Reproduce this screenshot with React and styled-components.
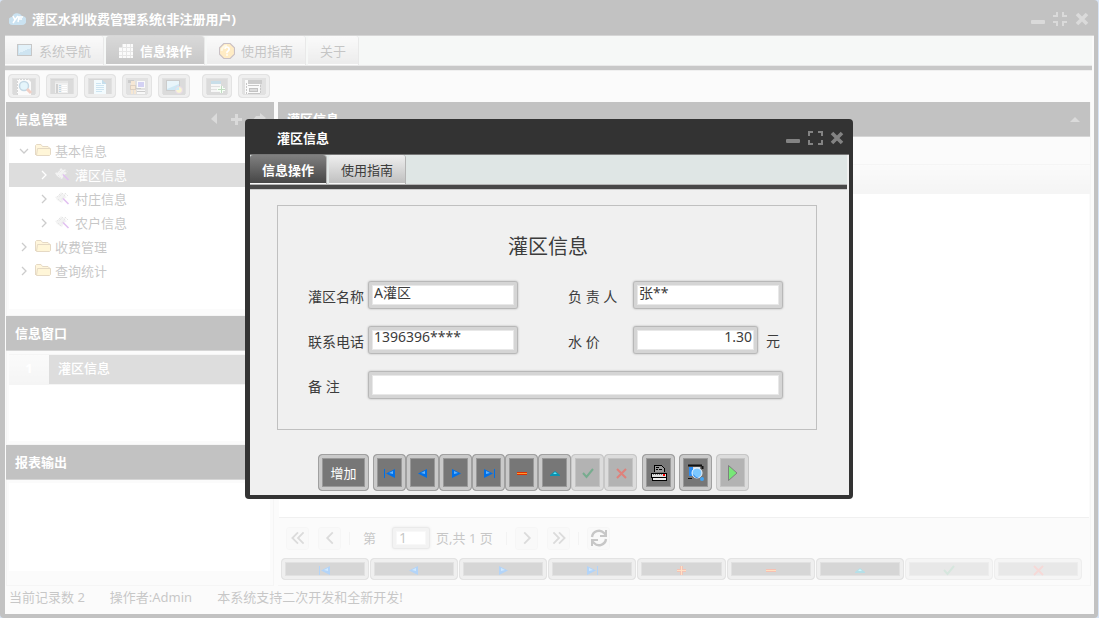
import React from 'react';
import styled, { createGlobalStyle, css } from 'styled-components';

const GlobalStyle = createGlobalStyle`
  * {
    box-sizing: border-box;
  }

  body {
    margin: 0;
    background: #7ea6dc;
    color: #3c3c3c;
    font: 13px/20px "Noto Sans", "Noto Sans CJK SC", sans-serif;
  }

  button, input {
    font: inherit;
    color: inherit;
  }

  svg {
    display: block;
    flex: none;
  }
`;

// Window frame
const Desktop = styled.div`
  min-height: 100vh;
  padding-right: 1px;
  display: flex;
`;

const Mask = styled.div`
  position: fixed;
  inset: 0;
  display: grid;
  place-items: center;
  padding-right: 1px;
  background: rgba(255, 255, 255, 0.7);
`;

const Frame = styled.section`
  display: flex;
  flex-direction: column;
  width: 100%;
  max-width: ${(p) => p.$maxWidth || 'none'};
  padding: 0 4px 4px 5px;
  background: #333;
  border-radius: 4px;
`;

const TitleBar = styled.header`
  display: flex;
  align-items: center;
  gap: 6px;
  height: 35px;
  padding: 3px 4px 0 ${(p) => p.$indent};
`;

const WindowTitle = styled.h1`
  flex: 1;
  margin: 0;
  color: #fff;
  font-size: 13px;
  font-weight: 700;
`;

const BareButton = styled.button`
  display: flex;
  padding: 0;
  border: 0;
  background: none;
  color: #838383;
`;

const FrameBody = styled.div`
  flex: 1;
  display: flex;
  flex-direction: column;
  border-top: 1px solid #777;
  background: #f0f0f0;
`;

// Tabs
const TabBar = styled.nav`
  display: flex;
  gap: 3px;
  height: 34px;
  margin-right: 2px;
  background: #dfe6e5;
  border-bottom: 4px solid #484848;
  box-shadow: inset 0 -1px #b4b4b4, 0 1px #ccc;
`;

const Tab = styled.button`
  display: flex;
  align-items: center;
  gap: 6px;
  height: 29px;
  padding: 2px 12px 0;
  border: solid #f8f8f8;
  border-width: 0 0 1px;
  border-radius: 3px 3px 0 0;
  background: linear-gradient(#efefef, #c0c0c0);
  box-shadow: 1px 0 #b4b4b4;
  white-space: nowrap;

  ${(p) =>
    p.$active &&
    css`
      background: linear-gradient(#808080, #464646);
      color: #fff;
      font-weight: 700;
    `}
`;

// Buttons
const ToolButton = styled.button`
  display: flex;
  align-items: center;
  justify-content: center;
  flex: ${(p) => (p.$grow ? '1' : 'none')};
  width: ${(p) => p.$width || '33px'};
  height: ${(p) => p.$height || '37px'};
  padding: 1px 0 0;
  border: 1px solid #a0a0a0;
  border-radius: 4px;
  background: #777;
  box-shadow: inset 0 0 0 3px #cacaca, inset 0 0 0 4px #999;
  color: #fff;

  &:disabled {
    opacity: 0.5;
  }
`;

const Toolbar = styled.div`
  display: flex;
  gap: 6px;
  padding: 4px 3px;
`;

const ToolGroup = styled.div`
  display: flex;
  gap: 6px;
  margin-right: 6px;
`;

// Panels
const Columns = styled.div`
  flex: 1;
  display: flex;
  gap: 4px;
  padding: 0 3px 0 1px;
`;

const Sidebar = styled.aside`
  display: flex;
  flex-direction: column;
  flex: none;
  width: 268px;
`;

const Panel = styled.main`
  flex: 1;
  min-width: 0;
  display: flex;
  flex-direction: column;
  border: solid #ddd;
  border-width: 0 1px 1px 0;
`;

const PanelHeader = styled.div`
  display: flex;
  align-items: center;
  gap: 6px;
  height: 35px;
  padding: 0 7px 0 9px;
  background: #333;
  border-bottom: 1px solid #777;
`;

const PanelTitle = styled.h2`
  flex: 1;
  margin: 0;
  color: #fff;
  font-size: 13px;
  font-weight: 700;
`;

const Section = styled.div`
  display: flex;
  flex: ${(p) => (p.$height ? 'none' : '1')};
  min-height: ${(p) => p.$height || '0'};
  padding: ${(p) => p.$pad || '3px 3px 4px'};
  border: 1px solid #ddd;
  border-top: 0;
`;

const Sheet = styled.div`
  flex: 1;
  background: #fff;
`;

const Tree = styled.ul`
  flex: 1;
  margin: 0;
  padding: 2px 0 0;
  list-style: none;
  background: #fff;
`;

const TreeItem = styled.li`
  display: flex;
  align-items: center;
  height: 24px;
  padding-left: ${(p) => (p.$level ? '30px' : '10px')};
  background: ${(p) => (p.$selected ? '#8e8e8e' : 'none')};
  color: ${(p) => (p.$selected ? '#fff' : '#444')};

  svg:first-child {
    margin-right: 6px;
    color: ${(p) => (p.$selected ? '#fff' : '#555')};
  }

  span {
    padding-left: 4px;
  }
`;

const OpenWindow = styled.div`
  display: flex;
  height: 31px;
  background: #8e8e8e;
  border: solid #ddd;
  border-width: 1px 0;
  color: #fff;
  font-weight: 500;
  line-height: 26px;
`;

const OpenIndex = styled.span`
  width: 40px;
  margin-right: 9px;
  background: linear-gradient(#f0f0f0, #ddd);
  font-weight: 700;
  text-align: center;
`;

const FilterRow = styled.div`
  height: 27px;
`;

const GridHead = styled.div`
  height: 30px;
  border: solid #ddd;
  border-width: 1px 0;
  background: linear-gradient(#f0f0f0, #dcdcdc);
`;

const GridBody = styled(Sheet)`
  margin: 0 1px 0 1px;
  border-bottom: 1px solid #ccc;
`;

const Pager = styled.div`
  display: flex;
  align-items: center;
  gap: 9px;
  height: 40px;
  padding-left: 8px;
  color: #444;
`;

const PageButton = styled.button`
  display: grid;
  place-items: center;
  width: 23px;
  height: 23px;
  padding: 0;
  border: 1px solid #e2e2e2;
  border-radius: 3px;
  background: #ececec;
  color: ${(p) => (p.$strong ? '#444' : '#888')};
`;

const Divider = styled.i`
  width: 1px;
  height: 13px;
  margin: 0 -1px;
  background: #d8d8d8;
`;

const PageLabel = styled.label`
  display: flex;
  align-items: center;
  gap: 16px;
  padding-left: 5px;
  font-size: 13px;
`;

const PageTotal = styled.span`
  width: 62px;
  margin-left: -3px;
  white-space: nowrap;
`;

const RecordBar = styled.div`
  display: flex;
  gap: 1px;
  padding: 0 8px 5px 3px;
`;

const StatusBar = styled.footer`
  display: flex;
  gap: 25px;
  height: 28px;
  padding: 1px 4px;
  color: #444;
`;

// Form
const TextInput = styled.input`
  width: ${(p) => p.$width || '150px'};
  height: ${(p) => p.$height || '28px'};
  padding: 0 5px 7px;
  border: 1px solid #b8b8b8;
  border-radius: 3px;
  background: #fff;
  box-shadow: inset 0 0 0 3px #d5d5d5, inset 0 0 0 4px #e8e8e8, 0 0 2px #aaa;
  font-size: 14px;
  line-height: 20px;
  text-align: ${(p) => p.$align || 'left'};
  outline: none;
`;

const PageInput = styled(TextInput)`
  padding: 0 6px 2px;
`;

const FormBox = styled.form`
  margin: 16px 32px 24px 27px;
  padding: 20px 0 30px 30px;
  border: 1px solid #c0c0c0;
`;

const FormTitle = styled.h2`
  margin: 0 28px 13px 0;
  font-size: 20px;
  font-weight: 400;
  line-height: 42px;
  text-align: center;
`;

const Fields = styled.div`
  display: grid;
  grid-template-columns: 60px 200px 65px 150px;
  row-gap: 17px;
  font-size: 14px;
`;

const FieldLabel = styled.label`
  padding-top: 6px;
  white-space: pre;
`;

const Field = styled.div`
  display: flex;
  gap: 8px;
  grid-column: ${(p) => (p.$wide ? 'span 3' : 'auto')};
`;

const Unit = styled.span`
  padding-top: 5px;
`;

const DialogActions = styled.div`
  display: flex;
  gap: 4px;
  padding: 0 0 4px 68px;
`;

const Joined = styled.div`
  display: flex;
  margin-right: 1px;
`;

// Icons
const LogoIcon = () => (
  <svg width="17" height="16" viewBox="0 0 17 16">
    <path d="M4 14a4 4 0 0 1-1-8 5.500 5.500 0 0 1 10-1 4.500 4.500 0 0 1 0 9z" fill="#4f9fd0" />
    <path d="M4 5l2 4 3-4M6 9l-2 3M9 11l1-5h4M10 8h3" fill="none" stroke="#fff" strokeWidth="1.500" />
  </svg>
);

const MinimizeIcon = () => (
  <svg width="16" height="16">
    <rect x="1" y="9" width="14" height="4" rx="1" fill="currentColor" />
  </svg>
);

const MaximizeIcon = () => (
  <svg width="16" height="16" fill="none" stroke="currentColor" strokeWidth="2">
    <path d="M2 6V2h4M11 2h4v4M15 10v4h-4M6 14H2v-4" />
  </svg>
);

const RestoreIcon = () => (
  <svg width="16" height="16" fill="none" stroke="currentColor" strokeWidth="2">
    <path d="M1 5h4V1M11 1v4h4M15 11h-4v4M5 15v-4H1" />
  </svg>
);

const CloseIcon = () => (
  <svg width="16" height="16" fill="none" stroke="currentColor" strokeWidth="3.600">
    <path d="M3 3l10 10M13 3L3 13" />
  </svg>
);

const ScreenIcon = () => (
  <svg width="16" height="16" shapeRendering="crispEdges">
    <rect x="1" y="1" width="14" height="12" fill="#5ba6cf" />
    <path d="M2 2h12v3L2 10z" fill="#9fd0ea" />
    <path d="M.5 1.500h14v11H.5z" fill="none" stroke="#444" />
  </svg>
);

const TableIcon = () => (
  <svg width="16" height="16" shapeRendering="crispEdges">
    <path d="M4 1h11v14H1V4h3z" fill="#f2f2f2" />
    <path d="M1 4.500h14M1 8.500h14M1 12.500h14M4.500 1v14M8.500 1v14M12.500 1v14" stroke="#aaa" />
  </svg>
);

const HelpIcon = () => (
  <svg width="16" height="16" viewBox="0.5 0.5 15 15">
    <path d="M5 1h6l4 4v6l-4 4H5l-4-4V5z" fill="#ffbe3c" stroke="#4e2f3c" />
    <path d="M3 8a5 5 0 0 1 5-5" fill="none" stroke="#ffe9a8" strokeWidth="2" />
    <path d="M6 6a2 2 0 1 1 3 2l-1 1v1M8 11v1.500" fill="none" stroke="#fff" strokeWidth="1.600" />
  </svg>
);

const SearchIcon = () => (
  <svg width="22" height="16">
    <rect width="22" height="16" fill="#888" />
    <path d="M4 0h11l3 3v13H4z" fill="#f0f0f0" />
    <path d="M4.500 16V.5H15" fill="none" stroke="#777" strokeDasharray="2 1" />
    <circle cx="11" cy="7" r="4.500" fill="#a9dcf2" stroke="#3a7ca4" strokeWidth="1.500" />
    <path d="M14 10l4 4" stroke="#d2603c" strokeWidth="3" />
  </svg>
);

const ListIcon = () => (
  <svg width="22" height="14" shapeRendering="crispEdges">
    <rect width="22" height="14" fill="#888" />
    <rect x="4" y="1" width="13" height="12" fill="#ccc" />
    <path d="M4 2h13" stroke="#aaa" strokeWidth="2" />
    <path d="M6 4v9" stroke="#666" strokeWidth="2" />
    <path d="M8 5.500h2M8 7.500h2M8 9.500h2M8 11.500h2" stroke="#2a7cb0" />
    <path d="M11 5.500h5M11 7.500h5M11 9.500h5M11 11.500h5" stroke="#fff" />
  </svg>
);

const PageIcon = () => (
  <svg width="22" height="14" shapeRendering="crispEdges">
    <rect width="22" height="14" fill="#888" />
    <path d="M5 0h8l4 4v10H5z" fill="#d6f0fc" />
    <path d="M13 0v4h4z" fill="#3d8fc0" />
    <path d="M7 3.500h5M7 5.500h8M7 7.500h8M7 9.500h8M7 11.500h6" stroke="#58a6cf" />
  </svg>
);

const UserIcon = () => (
  <svg width="20" height="16" shapeRendering="crispEdges">
    <rect width="20" height="16" fill="#999" />
    <path d="M1 1h6v3H1z" fill="#555" />
    <path d="M4 2h4v4H4zM3 6h6v5H3zM4 11h2v4H4zM7 11h2v4H7z" fill="#e0b070" />
    <path d="M3.500 6.500h5v4h-5z" fill="none" stroke="#8a6238" />
    <rect x="10" y="2" width="7" height="6" fill="#6b67d8" stroke="#eee" />
    <path d="M10 11h8v4h-8z" fill="#e8e8e8" />
    <path d="M10 12.500h8M9 9.500h5" stroke="#555" />
  </svg>
);

const MonitorIcon = () => (
  <svg width="22" height="16">
    <rect width="22" height="16" fill="#888" />
    <rect x="3.500" y="1.500" width="13" height="10" fill="#5fb2dc" stroke="#555" />
    <path d="M4 2h12v3L4 10z" fill="#b4def2" />
    <circle cx="16" cy="11" r="3.500" fill="#e6dc6e" stroke="#b07ab8" />
    <path d="M13 11a3 3 0 0 1 3-3v3z" fill="#5fc0e8" />
  </svg>
);

const AddRowIcon = () => (
  <svg width="20" height="16" shapeRendering="crispEdges">
    <rect width="20" height="16" fill="#888" />
    <rect x="4" y="2" width="10" height="11" fill="#e4e4e4" />
    <path d="M4 2h10v3H4z" fill="#4a90b4" />
    <path d="M4 7.500h10M4 10.500h6" stroke="#999" />
    <path d="M14 7v7M10 10.500h8" stroke="#e0ffe0" strokeWidth="3" />
    <path d="M14 7v7M11 10.500h7" stroke="#2f8b2f" />
  </svg>
);

const FormsIcon = () => (
  <svg width="22" height="16" shapeRendering="crispEdges">
    <rect width="22" height="16" fill="#999" />
    <path d="M2 1h15v14H2z" fill="#eee" />
    <path d="M5 1h14v4H5z" fill="#555" />
    <path d="M3.500 15V3M17.500 6v9" stroke="#444" strokeDasharray="2 1" />
    <path d="M5 6.500h11M5 14.500h12" stroke="#444" />
    <rect x="6" y="9" width="8" height="3" fill="#888" stroke="#333" />
  </svg>
);

const FolderIcon = () => (
  <svg width="16" height="14" viewBox="0 0 16 14">
    <path d="M.5 11V1.500l1-1H6l1.500 2H13l1.500 1.500V6" fill="#ffe08a" stroke="#a8803a" />
    <path d="M2.500 4.500h13v6l-1 1H1.500z" fill="#ffe27d" stroke="#a8803a" />
  </svg>
);

const LeafIcon = () => (
  <svg width="16" height="16">
    <path d="M6 1l2 2 3-1-1 3 2 1-3 2-2 4-2-1-3-2-2-3 3-1z" fill="#d8d8d8" />
    <path d="M5 3l-3 3M8 2L4 6M10 4L6 9M3 8l3 3M10 2l3 3" fill="none" stroke="#a8a8a8" strokeDasharray="2 1" />
    <path d="M8 7.500l5.500 5.500" stroke="#9a2ed0" strokeWidth="1.600" />
  </svg>
);

const Chevron = ({ dir = 'right', size = 10 }) => {
  const d = {
    right: 'M3 1l4 4-4 4',
    left: 'M7 1L3 5l4 4',
    down: 'M1 3l4 4 4-4',
    first: 'M5 1L1 5l4 4M9 1L5 5l4 4',
    last: 'M1 1l4 4-4 4M5 1l4 4-4 4',
  };
  return (
    <svg width={size} height={size} viewBox="0 0 10 10" fill="none" stroke="currentColor" strokeWidth="1.300">
      <path d={d[dir]} />
    </svg>
  );
};

const RefreshIcon = () => (
  <svg width="18" height="18" viewBox="0 0 18 18" fill="none" stroke="currentColor" strokeWidth="2.400">
    <path d="M2 8a7 7 0 0 1 12-4l2 2M16 10a7 7 0 0 1-12 4l-2-2" />
    <path d="M16 1v6h-6M2 17v-6h6" strokeWidth="2" />
  </svg>
);

const PanelGlyph = ({ d }) => (
  <svg width="16" height="16" fill="#838383">
    <path d={d} />
  </svg>
);

const recordShapes = {
  first: (
    <>
      <path d="M2.500 4v9" stroke="#0070e8" />
      <path d="M13 4v9L4 8.500z" fill="#0070e8" />
      <path d="M11 6v3L7 8z" fill="#62b4ff" />
    </>
  ),
  prev: (
    <>
      <path d="M12 4v9L3 8.500z" fill="#0070e8" />
      <path d="M10 6v3L6 8z" fill="#62b4ff" />
    </>
  ),
  next: (
    <>
      <path d="M4 4v9l9-4.500z" fill="#0070e8" />
      <path d="M6 6v3l4-1z" fill="#62b4ff" />
    </>
  ),
  last: (
    <>
      <path d="M13.500 4v9" stroke="#0070e8" />
      <path d="M3 4v9l9-4.500z" fill="#0070e8" />
      <path d="M5 6v3l4-1z" fill="#62b4ff" />
    </>
  ),
  add: (
    <>
      <path d="M8.500 4v9M4 8.500h9" stroke="#d83808" strokeWidth="3" />
      <path d="M8.500 4v9M4 8.500h9" stroke="#ff9a40" />
    </>
  ),
  remove: (
    <>
      <rect x="3" y="7" width="10" height="3" fill="#e03000" />
      <rect x="3" y="8" width="10" height="1" fill="#ff9a30" />
    </>
  ),
  edit: (
    <>
      <path d="M3 10l5-4 5 4v1H3z" fill="#0a93b0" />
      <path d="M6 9l2-2 2 2z" fill="#5fe4f8" />
    </>
  ),
  post: <path d="M3 8l3.500 4L13 4" fill="none" stroke="#006a30" strokeWidth="2" />,
  cancel: <path d="M4 4l9 9M13 4l-9 9" stroke="#d01408" strokeWidth="2" />,
};

const RecordIcon = ({ name }) => (
  <svg width="16" height="16">
    {recordShapes[name]}
  </svg>
);

const PrinterIcon = () => (
  <svg width="18" height="18" shapeRendering="crispEdges">
    <path d="M4 8V1h7l3 3v4" fill="#999" stroke="#000" />
    <path d="M6 3.500h3M6 5.500h2M9 5.500h3" stroke="#000" />
    <path d="M1 9h15v4H1z" fill="#ddd" stroke="#000" />
    <path d="M3 10.500h9" stroke="#777" strokeDasharray="1 1" />
    <path d="M13 10h2v2h-2z" fill="#f00" />
    <path d="M2 13h14v3H2z" fill="#f0f0f0" stroke="#000" />
  </svg>
);

const PreviewIcon = () => (
  <svg width="18" height="18">
    <path d="M1 1.500h14M15.500 2v3" stroke="#111" strokeWidth="2" />
    <rect x="2" y="3" width="4" height="9" fill="#2d8cf0" />
    <path d="M6 3h7v3H6z" fill="#ddd" />
    <circle cx="10" cy="9" r="5" fill="#7cc8ff" stroke="#eef6ff" />
    <path d="M6 10a5 5 0 0 0 6 4l-3-1z" fill="#1c78e0" />
    <circle cx="15" cy="15" r="2" fill="#42a5f5" />
    <path d="M1 14.500h4" stroke="#111" />
  </svg>
);

const RunIcon = () => (
  <svg width="16" height="18">
    <path d="M3.500 1.500L12 9l-8.500 7.500z" fill="#00e000" stroke="#111" />
  </svg>
);

const recordButtons = [
  { name: 'first', label: '首记录' },
  { name: 'prev', label: '上一条' },
  { name: 'next', label: '下一条' },
  { name: 'last', label: '末记录' },
  { name: 'add', label: '增加' },
  { name: 'remove', label: '删除' },
  { name: 'edit', label: '编辑' },
  { name: 'post', label: '提交', disabled: true },
  { name: 'cancel', label: '取消', disabled: true },
];

const tree = [
  { text: '基本信息', open: true },
  { text: '灌区信息', level: 1, selected: true },
  { text: '村庄信息', level: 1 },
  { text: '农户信息', level: 1 },
  { text: '收费管理' },
  { text: '查询统计' },
];

const tools = [
  { label: '查询', icon: <SearchIcon />, width: '32px' },
  { label: '列表', icon: <ListIcon />, width: '32px' },
  { label: '文档', icon: <PageIcon />, width: '32px' },
  { label: '用户', icon: <UserIcon />, width: '30px' },
  { label: '窗口', icon: <MonitorIcon />, width: '32px' },
];

function WindowControls({ maximized }) {
  return (
    <>
      <BareButton aria-label="最小化"><MinimizeIcon /></BareButton>
      <BareButton aria-label="最大化">{maximized ? <RestoreIcon /> : <MaximizeIcon />}</BareButton>
      <BareButton aria-label="关闭"><CloseIcon /></BareButton>
    </>
  );
}

function NavSidebar() {
  return (
    <Sidebar>
      <PanelHeader>
        <PanelTitle>信息管理</PanelTitle>
        <BareButton aria-label="收起"><PanelGlyph d="M10 2v11L4 8z" /></BareButton>
        <BareButton aria-label="展开"><PanelGlyph d="M6 3h3v4h4v3H9v4H6v-4H2V7h4z" /></BareButton>
        <BareButton aria-label="返回"><PanelGlyph d="M9 2l6 5-6 5V9H5l-3 4V9l3-4h4z" /></BareButton>
      </PanelHeader>
      <Section $height="179px" $pad="0 3px 6px 2px">
        <Tree>
          {tree.map((item) => (
            <TreeItem key={item.text} $level={item.level} $selected={item.selected}>
              <Chevron dir={item.open ? 'down' : 'right'} />
              {item.level ? <LeafIcon /> : <FolderIcon />}
              <span>{item.text}</span>
            </TreeItem>
          ))}
        </Tree>
      </Section>
      <PanelHeader>
        <PanelTitle>信息窗口</PanelTitle>
      </PanelHeader>
      <Section $height="94px" $pad="3px 3px 3px 2px">
        <Sheet>
          <OpenWindow>
            <OpenIndex>1</OpenIndex>
            灌区信息
          </OpenWindow>
        </Sheet>
      </Section>
      <PanelHeader>
        <PanelTitle>报表输出</PanelTitle>
      </PanelHeader>
      <Section $pad="3px 3px 14px 2px">
        <Sheet />
      </Section>
    </Sidebar>
  );
}

function DataPanel() {
  return (
    <Panel>
      <PanelHeader>
        <PanelTitle>灌区信息</PanelTitle>
        <BareButton aria-label="折叠"><PanelGlyph d="M3 11l5-5 5 5z" /></BareButton>
      </PanelHeader>
      <FilterRow />
      <GridHead />
      <GridBody />
      <Pager>
        <PageButton aria-label="首页"><Chevron dir="first" size={14} /></PageButton>
        <PageButton aria-label="上一页"><Chevron dir="left" size={14} /></PageButton>
        <Divider />
        <PageLabel>
          第
          <PageInput $width="38px" $height="22px" defaultValue="1" />
        </PageLabel>
        <PageTotal>页,共 1 页</PageTotal>
        <Divider />
        <PageButton aria-label="下一页"><Chevron dir="right" size={14} /></PageButton>
        <PageButton aria-label="末页"><Chevron dir="last" size={14} /></PageButton>
        <Divider />
        <PageButton aria-label="刷新" $strong><RefreshIcon /></PageButton>
      </Pager>
      <RecordBar>
        {recordButtons.map((b) => (
          <ToolButton key={b.name} aria-label={b.label} disabled={b.disabled} $grow $height="22px">
            <RecordIcon name={b.name} />
          </ToolButton>
        ))}
      </RecordBar>
    </Panel>
  );
}

function RecordDialog() {
  return (
    <Frame $maxWidth="608px" role="dialog" aria-label="灌区信息">
      <TitleBar $indent="27px">
        <WindowTitle>灌区信息</WindowTitle>
        <WindowControls />
      </TitleBar>
      <FrameBody>
        <TabBar>
          <Tab $active>信息操作</Tab>
          <Tab>使用指南</Tab>
        </TabBar>
        <FormBox>
          <FormTitle>灌区信息</FormTitle>
          <Fields>
            <FieldLabel htmlFor="area">灌区名称</FieldLabel>
            <Field><TextInput id="area" defaultValue="A灌区" /></Field>
            <FieldLabel htmlFor="owner">负 责 人</FieldLabel>
            <Field><TextInput id="owner" defaultValue="张**" /></Field>

            <FieldLabel htmlFor="phone">联系电话</FieldLabel>
            <Field><TextInput id="phone" defaultValue="1396396****" /></Field>
            <FieldLabel htmlFor="price">水 价</FieldLabel>
            <Field>
              <TextInput id="price" $width="125px" $align="right" defaultValue="1.30" />
              <Unit>元</Unit>
            </Field>

            <FieldLabel htmlFor="note">备 注</FieldLabel>
            <Field $wide><TextInput id="note" $width="100%" /></Field>
          </Fields>
        </FormBox>
        <DialogActions>
          <ToolButton $width="51px">增加</ToolButton>
          <Joined>
            {recordButtons
              .filter((b) => b.name !== 'add')
              .map((b) => (
                <ToolButton key={b.name} aria-label={b.label} disabled={b.disabled}>
                  <RecordIcon name={b.name} />
                </ToolButton>
              ))}
          </Joined>
          <ToolButton aria-label="打印"><PrinterIcon /></ToolButton>
          <ToolButton aria-label="预览"><PreviewIcon /></ToolButton>
          <ToolButton aria-label="执行" disabled><RunIcon /></ToolButton>
        </DialogActions>
      </FrameBody>
    </Frame>
  );
}

function App() {
  return (
    <>
      <GlobalStyle />
      <Desktop>
        <Frame>
          <TitleBar $indent="4px">
            <LogoIcon />
            <WindowTitle>灌区水利收费管理系统(非注册用户)</WindowTitle>
            <WindowControls maximized />
          </TitleBar>
          <FrameBody>
            <TabBar>
              <Tab><ScreenIcon />系统导航</Tab>
              <Tab $active><TableIcon />信息操作</Tab>
              <Tab><HelpIcon />使用指南</Tab>
              <Tab>关于</Tab>
            </TabBar>
            <Toolbar>
              <ToolGroup>
                {tools.map((t) => (
                  <ToolButton key={t.label} aria-label={t.label} $width={t.width} $height="24px">
                    {t.icon}
                  </ToolButton>
                ))}
              </ToolGroup>
              <ToolButton aria-label="新增" $width="30px" $height="24px"><AddRowIcon /></ToolButton>
              <ToolButton aria-label="表单" $width="32px" $height="24px"><FormsIcon /></ToolButton>
            </Toolbar>
            <Columns>
              <NavSidebar />
              <DataPanel />
            </Columns>
            <StatusBar>
              <span>当前记录数 2</span>
              <span>操作者:Admin</span>
              <span>本系统支持二次开发和全新开发!</span>
            </StatusBar>
          </FrameBody>
        </Frame>
      </Desktop>
      <Mask>
        <RecordDialog />
      </Mask>
    </>
  );
}

export default App;
